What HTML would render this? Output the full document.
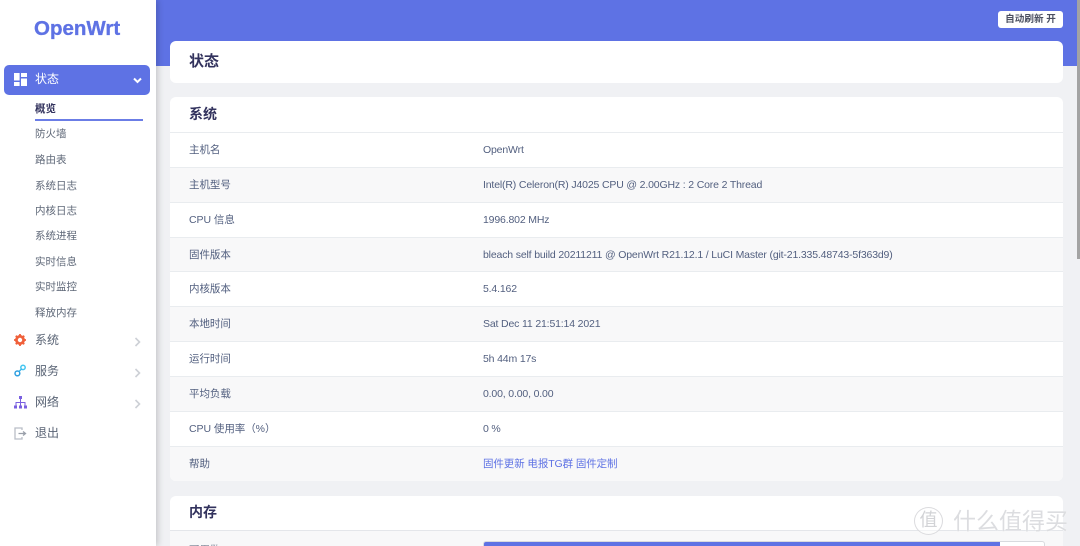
<!DOCTYPE html>
<html><head><meta charset="utf-8">
<style>
*{box-sizing:border-box;margin:0;padding:0}
html,body{width:1080px;height:546px;overflow:hidden;background:#f0f1f4}
body{position:relative;font-family:"Liberation Sans","Noto Sans CJK SC",sans-serif;color:#525f7f}
.abs{position:absolute;white-space:nowrap}
#top{left:156px;top:0;width:924px;height:66px;background:#5e72e4;position:absolute}
#side{position:absolute;left:0;top:0;width:156px;height:546px;background:#fff;box-shadow:2px 0 6px rgba(0,0,0,.18)}
.card{position:absolute;left:170px;width:893px;background:#fff;border-radius:6px}
.row{position:absolute;left:0;width:893px;height:34.8px;border-top:1px solid #e9ecef;font-size:10.5px;line-height:35px;color:#525f7f}
.row.g{background:#f8f8f9}
.row b{font-weight:400;position:absolute;left:19px;top:0;letter-spacing:-.05px}
.row i{font-style:normal;position:absolute;left:313px;top:0;white-space:nowrap;letter-spacing:-.16px}
.sub{position:absolute;left:35px;font-size:10.5px;line-height:14px;color:#5f6878;white-space:nowrap}
.m{position:absolute;left:35px;font-size:12px;line-height:16px;color:#5a6475}
.ch{position:absolute;left:134px}
</style></head><body>
<div id="top"></div>
<div class="abs" style="left:998px;top:11px;width:65px;height:17px;background:#fff;border-radius:3px;font-size:9.6px;font-weight:700;line-height:17px;text-align:center;color:#4a4f60">自动刷新 开</div>

<div class="card" style="top:41px;height:42px"><div class="abs" style="left:19px;top:10px;font-size:15px;line-height:21px;font-weight:700;color:#32325d">状态</div></div>

<div class="card" style="top:97px;height:384px;overflow:hidden">
<div class="abs" style="left:19px;top:7px;font-size:14px;line-height:20px;font-weight:700;color:#32325d">系统</div>
<div class="row" style="top:35px"><b>主机名</b><i>OpenWrt</i></div>
<div class="row g" style="top:70px"><b>主机型号</b><i>Intel(R) Celeron(R) J4025 CPU @ 2.00GHz : 2 Core 2 Thread</i></div>
<div class="row" style="top:105px"><b>CPU 信息</b><i>1996.802 MHz</i></div>
<div class="row g" style="top:140px"><b>固件版本</b><i>bleach self build 20211211 @ OpenWrt R21.12.1 / LuCI Master (git-21.335.48743-5f363d9)</i></div>
<div class="row" style="top:174px"><b>内核版本</b><i>5.4.162</i></div>
<div class="row g" style="top:209px"><b>本地时间</b><i>Sat Dec 11 21:51:14 2021</i></div>
<div class="row" style="top:244px"><b>运行时间</b><i>5h 44m 17s</i></div>
<div class="row g" style="top:279px"><b>平均负载</b><i>0.00, 0.00, 0.00</i></div>
<div class="row" style="top:314px"><b>CPU 使用率（%）</b><i>0 %</i></div>
<div class="row g" style="top:349px"><b>帮助</b><i style="color:#5e72e4;letter-spacing:-.1px">固件更新 电报TG群 固件定制</i></div>
</div>

<div class="card" style="top:496px;height:50px;border-radius:6px 6px 0 0;overflow:hidden">
<div class="abs" style="left:19px;top:6px;font-size:14px;line-height:20px;font-weight:700;color:#32325d">内存</div>
<div class="abs" style="left:0;top:34px;width:893px;height:16px;background:#f8f8f9;border-top:1px solid #e4e6ea"></div>
<div class="abs" style="left:19px;top:47px;font-size:10.5px;line-height:14px;color:#8a92a2">可用数</div>
<div class="abs" style="left:313px;top:45px;width:562px;height:10px;border:1px solid #d8dade;border-radius:3px;background:#fff;overflow:hidden"><div style="width:516px;height:10px;background:#5e72e4"></div></div>
</div>

<div class="abs" style="left:1077px;top:0;width:3px;height:259px;background:#a3a3a3"></div>

<div id="side">
<div class="abs" style="left:34px;top:16px;font-size:20.500px;line-height:26px;font-weight:700;color:#5e72e4;-webkit-text-stroke:.3px #5e72e4">OpenWrt</div>
<div class="abs" style="left:4px;top:65px;width:146px;height:30px;background:#5e72e4;border-radius:5px"></div>
<svg class="abs" style="left:14px;top:73px" width="13" height="13" viewBox="0 0 13 13" fill="#fff"><rect x="0" y="0" width="5.600" height="7.500"/><rect x="0" y="9" width="5.600" height="4"/><rect x="7" y="0" width="6" height="4"/><rect x="7" y="5.500" width="6" height="7.500"/></svg>
<div class="abs" style="left:35px;top:71px;font-size:12px;line-height:16px;color:#fff">状态</div>
<svg class="abs" style="left:133px;top:77px" width="9" height="7" viewBox="0 0 9 7"><path d="M1 1.500L4.500 5L8 1.500" fill="none" stroke="#fff" stroke-width="2"/></svg>

<div class="sub" style="top:102px;color:#32325d;font-weight:700">概览</div>
<div class="abs" style="left:35px;top:119px;width:108px;height:2px;background:#6b7de6"></div>
<div class="sub" style="top:127px">防火墙</div>
<div class="sub" style="top:153px">路由表</div>
<div class="sub" style="top:179px">系统日志</div>
<div class="sub" style="top:204px">内核日志</div>
<div class="sub" style="top:229px">系统进程</div>
<div class="sub" style="top:255px">实时信息</div>
<div class="sub" style="top:280px">实时监控</div>
<div class="sub" style="top:306px">释放内存</div>

<svg class="abs" style="left:14px;top:334px" width="12" height="12" viewBox="0 0 12 12"><circle cx="6" cy="6" r="3.600" fill="none" stroke="#f0603a" stroke-width="2.800"/><path d="M6 0V2M6 10V12M0 6H2M10 6H12M1.800 1.800L3 3M9 9L10.200 10.200M1.800 10.200L3 9M9 3L10.200 1.800" stroke="#f0603a" stroke-width="1.800"/></svg>
<div class="m" style="top:332px">系统</div>
<svg class="ch" style="top:337px" width="7" height="10" viewBox="0 0 7 10"><path d="M1.500 1L5.500 5L1.500 9" fill="none" stroke="#cdd0d6" stroke-width="1.600"/></svg>

<svg class="abs" style="left:14px;top:364px" width="13" height="13" viewBox="0 0 13 13" fill="none"><circle cx="9" cy="3.400" r="2.200" stroke="#45c6f0" stroke-width="1.500"/><circle cx="3.400" cy="9.400" r="2.400" stroke="#2f9fe0" stroke-width="1.500"/><path d="M5 7.500L7.500 5" stroke="#3cb3ea" stroke-width="1.300"/></svg>
<div class="m" style="top:363px">服务</div>
<svg class="ch" style="top:368px" width="7" height="10" viewBox="0 0 7 10"><path d="M1.500 1L5.500 5L1.500 9" fill="none" stroke="#cdd0d6" stroke-width="1.600"/></svg>

<svg class="abs" style="left:14px;top:396px" width="13" height="13" viewBox="0 0 13 13" fill="#7a60e0"><rect x="5" y="0" width="3" height="3"/><rect x="0" y="9.500" width="3" height="3"/><rect x="5" y="9.500" width="3" height="3"/><rect x="10" y="9.500" width="3" height="3"/><path d="M6 3h1v3h4.500v3.500h-1V7H7v2.500H6V7H2.500v2.500h-1V6H6z"/></svg>
<div class="m" style="top:394px">网络</div>
<svg class="ch" style="top:399px" width="7" height="10" viewBox="0 0 7 10"><path d="M1.500 1L5.500 5L1.500 9" fill="none" stroke="#cdd0d6" stroke-width="1.600"/></svg>

<svg class="abs" style="left:14px;top:427px" width="13" height="13" viewBox="0 0 13 13" fill="none"><path d="M8 3V1H1V12H8V10" stroke="#b9bec7" stroke-width="1.300"/><path d="M4.500 6.500H11M9 4.500L11.500 6.500L9 8.500" stroke="#9aa0aa" stroke-width="1.300"/></svg>
<div class="m" style="top:425px">退出</div>
</div>

<div class="abs" style="left:914px;top:507px;width:29px;height:28px;border-radius:50%;border:1.500px solid rgba(215,215,218,.9);background:rgba(255,255,255,.5);font-size:18px;line-height:25px;text-align:center;color:#d2d3d6">值</div>
<div class="abs" style="left:953px;top:507px;font-size:23px;line-height:28px;color:#dcdde0;text-shadow:0 0 1px #fff">什么值得买</div>
</body></html>
